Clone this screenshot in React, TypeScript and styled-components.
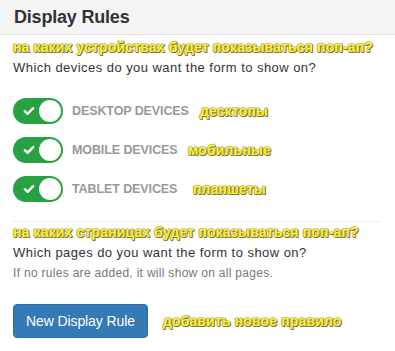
import React from 'react'
import styled, { createGlobalStyle } from 'styled-components'

const GlobalStyle = createGlobalStyle`
  body {
    margin: 0;
    background: #fff;
    font-family: "Liberation Sans", Arial, sans-serif;
    color: #333;
  }
`

const Panel = styled.div`
  width: 395px;
  height: 351px;
  background: #fff;
  overflow: hidden;
`

const Header = styled.div`
  height: 35px;
  background: #f5f5f5;
  border-bottom: 1px solid #e3e3e3;
  display: flex;
  align-items: center;
  padding: 0 14px;
  box-sizing: border-box;
`

const Title = styled.h3`
  margin: 0;
  font-size: 18px;
  font-weight: 700;
  color: #333;
  letter-spacing: -0.2px;
`

const Body = styled.div`
  padding: 4px 13px 0;
`

const Note = styled.div<{ $indent?: number }>`
  font-family: "Liberation Sans", Arial, sans-serif;
  font-weight: 700;
  font-size: 14px;
  line-height: 16px;
  color: #fbf03c;
  margin-left: ${p => p.$indent || 0}px;
  letter-spacing: 0.15px;
  text-shadow:
    1px 1px 0 #7d7538,
    -1px 0 0 #bdb460,
    0 -1px 0 #cfc670,
    1px 0 0 #928946,
    0 1px 0 #928946;
  white-space: nowrap;
`

const Question = styled.p`
  margin: 4px 0 0;
  font-size: 13px;
  line-height: 17px;
  letter-spacing: 0.45px;
  color: #333;
`

const Hint = styled.p`
  margin: 4px 0 0;
  font-size: 12px;
  line-height: 16px;
  letter-spacing: 0.3px;
  color: #777;
`

const ToggleList = styled.div`
  display: flex;
  flex-direction: column;
  gap: 13px;
  margin-top: 22px;
`

const ToggleRow = styled.div`
  display: flex;
  align-items: center;
  height: 26px;
`

const Switch = styled.div`
  position: relative;
  width: 50px;
  height: 26px;
  border-radius: 13px;
  background: #27a243;
  flex-shrink: 0;
  display: flex;
  align-items: center;
  padding-left: 10px;
  box-sizing: border-box;
`

const Knob = styled.span`
  position: absolute;
  right: 2px;
  top: 2px;
  width: 22px;
  height: 22px;
  border-radius: 50%;
  background: #fff;
`

const Label = styled.span<{ $width: number }>`
  width: ${p => p.$width}px;
  margin-left: 9px;
  font-size: 12.5px;
  font-weight: 700;
  color: #999;
  text-transform: uppercase;
  letter-spacing: -0.1px;
`

const Divider = styled.hr`
  border: 0;
  border-top: 1px solid #eee;
  margin: 19px 0 2px;
  width: 368px;
`

const ActionRow = styled.div`
  display: flex;
  align-items: center;
  margin-top: 23px;
  gap: 15px;
`

const Button = styled.button`
  height: 34px;
  padding: 0 12px;
  border: 1px solid #2e6da4;
  border-radius: 4px;
  background: #337ab7;
  color: #fff;
  font-family: "Liberation Sans", Arial, sans-serif;
  font-size: 14px;
  letter-spacing: -0.1px;
  cursor: pointer;
`

const Check = () => (
  <svg width="12" height="10" viewBox="0 0 12 10">
    <path d="M1.8 5.2 L4.6 7.8 L10.2 2.2" fill="none" stroke="#fff" strokeWidth="2.4" strokeLinecap="round" strokeLinejoin="round" />
  </svg>
)

const DEVICES = [
  { label: 'Desktop devices', note: 'десктопы', width: 118, indent: 10 },
  { label: 'Mobile devices', note: 'мобильные', width: 106, indent: 10 },
  { label: 'Tablet devices', note: 'планшеты', width: 111, indent: 10 },
]

export default function App() {
  return (
    <Panel>
      <GlobalStyle />
      <Header>
        <Title>Display Rules</Title>
      </Header>
      <Body>
        <Note>на каких устройствах будет показываться поп-ап?</Note>
        <Question>Which devices do you want the form to show on?</Question>
        <ToggleList>
          {DEVICES.map(d => (
            <ToggleRow key={d.label}>
              <Switch>
                <Check />
                <Knob />
              </Switch>
              <Label $width={d.width}>{d.label}</Label>
              <Note $indent={d.indent}>{d.note}</Note>
            </ToggleRow>
          ))}
        </ToggleList>
        <Divider />
        <Note>на каких страницах будет показываться поп-ап?</Note>
        <Question>Which pages do you want the form to show on?</Question>
        <Hint>If no rules are added, it will show on all pages.</Hint>
        <ActionRow>
          <Button>New Display Rule</Button>
          <Note>добавить новое правило</Note>
        </ActionRow>
      </Body>
    </Panel>
  )
}
